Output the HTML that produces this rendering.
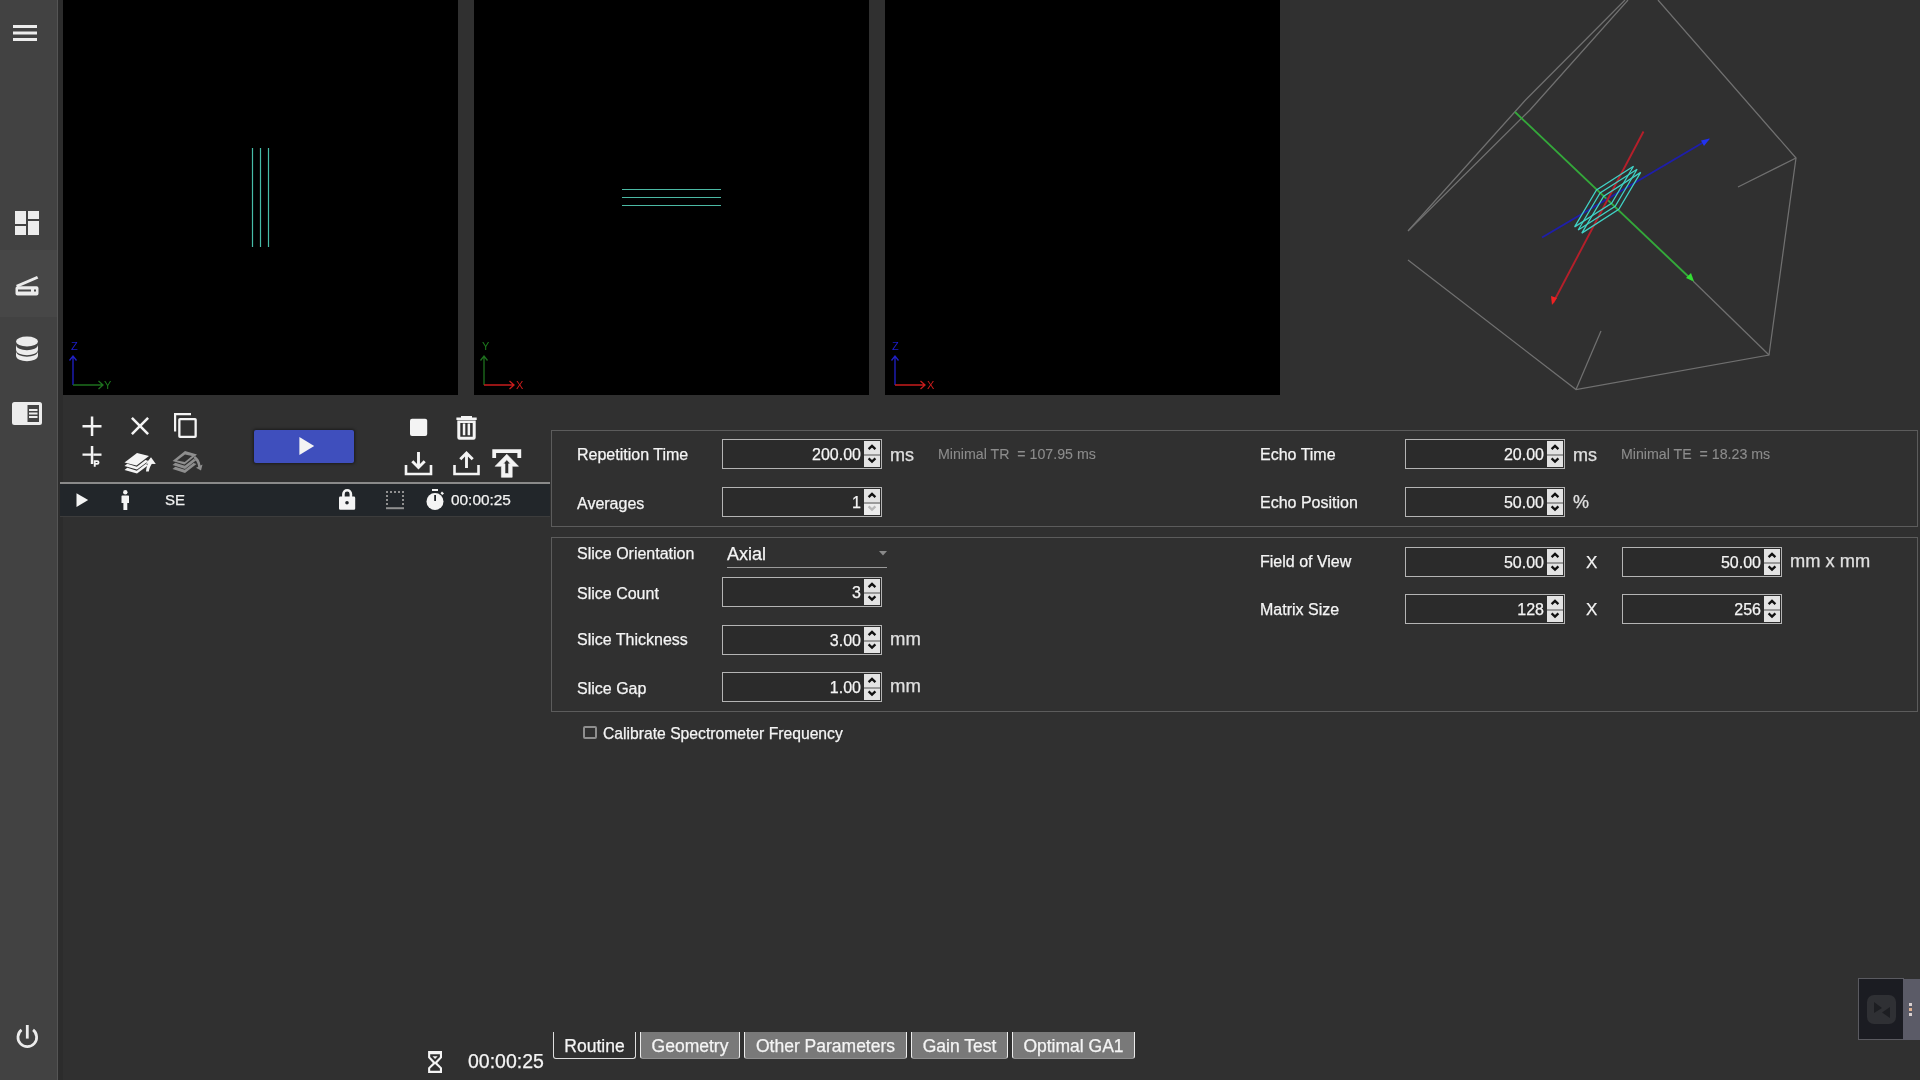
<!DOCTYPE html>
<html><head><meta charset="utf-8">
<style>
*{margin:0;padding:0;box-sizing:border-box}
html,body{width:1920px;height:1080px;overflow:hidden;background:#303030;font-family:"Liberation Sans",sans-serif;color:#f2f2f2}
.a{position:absolute}
.t{position:absolute;white-space:nowrap;line-height:1;-webkit-text-stroke:0.25px currentColor}
.spin .v,.tab{-webkit-text-stroke:0.25px currentColor}
body{filter:grayscale(0.001)}
#side{left:0;top:0;width:57px;height:1080px;background:#424242}
#sideb{left:57px;top:0;width:1px;height:1080px;background:#555}
#strip{left:58px;top:0;width:5px;height:1080px;background:#2c2c2c}
.vp{top:0;width:395px;height:395px;background:#000}
.lbl{font-size:16px;color:#f4f4f4}
.spin{position:absolute;width:160px;height:30px;border:1px solid #b4b4b4;background:#2b2b2b}
.spin .v{position:absolute;right:20px;top:0;line-height:30px;font-size:16px;color:#f4f4f4}
.spin .bt{position:absolute;right:1px;top:1px;width:16px;height:13px;background:#e3e3e3}
.spin .bb{position:absolute;right:1px;bottom:1px;width:16px;height:13px;background:#e3e3e3}
.unit{font-size:18px;color:#e0e0e0}
.minf{font-size:14.2px;color:#8c8c8c;-webkit-text-stroke:0.1px currentColor!important}
.grp{position:absolute;border:1px solid #5c5c5c}
.tab{position:absolute;top:1032px;height:27px;background:#797979;border:1px solid #ececec;border-bottom-color:#8e8e8e;border-top:none;border-radius:0 0 3px 3px;font-size:17.5px;color:#f4f4f4;text-align:center;line-height:28px}
</style></head><body>
<!-- sidebar -->
<div id="side" class="a"></div>
<div class="a" style="left:0;top:250px;width:57px;height:67px;background:#474747"></div>
<div id="sideb" class="a"></div>
<div id="strip" class="a"></div>
<svg class="a" style="left:0;top:0" width="57" height="1080" viewBox="0 0 57 1080" fill="#ececec">
 <!-- menu -->
 <rect x="13" y="25" width="24" height="3"/><rect x="13" y="31.5" width="24" height="3"/><rect x="13" y="38" width="24" height="3"/>
 <!-- dashboard -->
 <path d="M15 211h11v13H15zM28 211h11v8H28zM15 226h11v9H15zM28 221h11v14H28z"/>
 <!-- scanner -->
 <path d="M16 285L37 276L38.3 278.6L17.5 287.5Z"/>
 <path d="M17.5 286.3H36.5A2 2 0 0 1 38.5 288.3V293.5A2 2 0 0 1 36.5 295.5H17.5A2 2 0 0 1 15.5 293.5V288.3A2 2 0 0 1 17.5 286.3ZM18 289.5V291.5H31V289.5ZM34 289.5V291.5H36V289.5Z" fill-rule="evenodd"/>
 <!-- database -->
 <ellipse cx="27" cy="341.5" rx="11" ry="5"/>
 <path d="M16 344.5C16 352 38 352 38 344.5V349.5C38 357 16 357 16 349.5Z"/>
 <path d="M16 351C16 358.5 38 358.5 38 351V355.5C38 363 16 363 16 355.5Z"/>
 <!-- panel -->
 <path d="M14.5 402H39.5A2.5 2.5 0 0 1 42 404.5V422.5A2.5 2.5 0 0 1 39.5 425H14.5A2.5 2.5 0 0 1 12 422.5V404.5A2.5 2.5 0 0 1 14.5 402ZM27.5 405V422H39V405Z" fill-rule="evenodd"/>
 <path d="M29 409H37.5V411H29zM29 412.5H37.5V414.5H29zM29 416H37.5V418H29z"/>
 <!-- power -->
 <path d="M25.9 1025H28.7V1038.6H25.9Z"/>
 <path d="M20.71 1028.87A10.7 10.7 0 1 0 33.89 1028.87L32.23 1031.0A8 8 0 1 1 22.37 1031.0Z"/>
</svg>

<!-- viewports -->
<div class="a vp" style="left:63px"></div>
<div class="a vp" style="left:474px"></div>
<div class="a vp" style="left:885px"></div>
<svg class="a" style="left:0;top:0" width="1920" height="400" viewBox="0 0 1920 400">
 <g fill="none" stroke-width="1.2">
  <!-- vp1 slices -->
  <path d="M252.5 148V247M260.5 148V247M268.5 148V247" stroke="#46bca8"/>
  <!-- vp2 slices -->
  <path d="M622 189.5H721M622 197.5H721M622 205.5H721" stroke="#4cb9a4"/>
  <!-- vp1 axes -->
  <path d="M73 385V356M69.5 360.5L73 356L76.5 360.5" stroke="#2020c8" stroke-width="1.3"/>
  <path d="M73 385H103M98.5 381L103 385L98.5 389" stroke="#1e701e" stroke-width="1.3"/>
  <!-- vp2 axes -->
  <path d="M484 385V356M480.5 360.5L484 356L487.5 360.5" stroke="#1e701e" stroke-width="1.3"/>
  <path d="M484 385H514M509.5 381L514 385L509.5 389" stroke="#c81c1c" stroke-width="1.3"/>
  <!-- vp3 axes -->
  <path d="M895 385V356M891.5 360.5L895 356L898.5 360.5" stroke="#2020c8" stroke-width="1.3"/>
  <path d="M895 385H925M920.5 381L925 385L920.5 389" stroke="#c81c1c" stroke-width="1.3"/>
 </g>
 <g font-family="Liberation Sans" font-size="11">
  <text x="71" y="350" fill="#1c1ccc">Z</text>
  <text x="104" y="389" fill="#1d7a1d">Y</text>
  <text x="482" y="350" fill="#1d7a1d">Y</text>
  <text x="516" y="389" fill="#cc1c1c">X</text>
  <text x="892" y="350" fill="#1c1ccc">Z</text>
  <text x="927" y="389" fill="#cc1c1c">X</text>
 </g>
 <!-- 3D box -->
 <g fill="none" stroke="#707070" stroke-width="1.25">
  <path d="M1625 0L1525.5 100L1408 231"/>
  <path d="M1628 0L1530 110L1409 230"/>
  <path d="M1658 0L1796 158L1769 355L1576 389.5L1408 260"/>
  <path d="M1796 158L1738 187"/>
  <path d="M1576 389.5L1601 331"/>
  <path d="M1693 281L1769 355"/>
 </g>
 <!-- 3D axes -->
 <g fill="none" stroke-width="1.9">
  <path d="M1515 112L1692 280" stroke="#34a83a"/>
  <path d="M1542 237.5L1709 139" stroke="#1e1eaa"/>
  <path d="M1643.5 131.5L1553 303" stroke="#b51f2a"/>
 </g>
 <g>
  <path d="M1694 281.5L1686 278L1691 273Z" fill="#33dd33"/>
  <path d="M1710 138.5L1701 140.5L1704 146Z" fill="#2233ee"/>
  <path d="M1552 305L1551 296L1557 298Z" fill="#ee2222"/>
 </g>
 <!-- 3D slices -->
 <g fill="none" stroke="#40d2c6" stroke-width="1.25">
  <path d="M1574.6 226.9L1596.5 189.9L1633.5 166.2L1611.6 203.2Z"/>
  <path d="M1578.2 230L1600.1 193L1637.1 169.3L1615.2 206.3Z"/>
  <path d="M1581.8 233.1L1603.7 196.1L1640.7 172.4L1618.8 209.4Z"/>
 </g>
</svg>

<!-- sequence row -->
<div class="a" style="left:60px;top:482px;width:490px;height:2px;background:#8a8a8a"></div>
<div class="a" style="left:60px;top:484px;width:490px;height:32px;background:#22262a"></div>
<div class="a" style="left:60px;top:516px;width:490px;height:1px;background:#3c3c3c"></div>

<!-- toolbar -->
<svg class="a" style="left:60px;top:400px" width="490" height="120" viewBox="60 400 490 120">
 <g fill="#f4f4f4">
  <!-- add -->
  <path d="M90.8 416.5H93.3V425H101.5V427.5H93.3V436H90.8V427.5H82.5V425H90.8Z"/>
  <!-- close -->
  <path d="M131 418.8L132.8 417L140 424.2L147.2 417L149 418.8L141.8 426L149 433.2L147.2 435L140 427.8L132.8 435L131 433.2L138.2 426Z"/>
  <!-- copy -->
  <path d="M174 413H191V415.2H176.2V431.5H174Z"/>
  <path d="M180 418H195A1.8 1.8 0 0 1 196.8 419.8V436.2A1.8 1.8 0 0 1 195 438H180A1.8 1.8 0 0 1 178.2 436.2V419.8A1.8 1.8 0 0 1 180 418ZM180.5 420.3V435.7H194.5V420.3Z" fill-rule="evenodd"/>
  <!-- add P -->
  <path d="M90.8 446H93.3V464H90.8V455.8H82.5V453.5H90.8Z"/>
  <path d="M93.3 453.5H101.5V455.8H93.3Z"/>
  <path d="M93.8 460.3H97.3A2.2 2.2 0 0 1 97.3 464.7H95.7V466.8H93.8ZM95.7 462V463H97.1A0.5 0.5 0 0 0 97.1 462Z" fill-rule="evenodd"/>
  <!-- stop -->
  <rect x="410" y="418.8" width="17.2" height="17.2" rx="2"/>
  <!-- trash -->
  <path d="M461 416H472V417.5H476.7V420H456.4V417.5H461Z"/>
  <path d="M457.3 420.5H475.7V437.5A2.2 2.2 0 0 1 473.5 439.7H459.5A2.2 2.2 0 0 1 457.3 437.5ZM460.3 423V436.8H472.7V423Z" fill-rule="evenodd"/>
  <path d="M462.8 423.5H465.3V435.3H462.8zM467.6 423.5H470.1V435.3H467.6z"/>
 </g>
 <g fill="none" stroke="#f4f4f4" stroke-width="2.6">
  <!-- download -->
  <path d="M406 465V474H431V465"/>
  <path d="M418.5 452V467.5M412.3 461.3L418.5 467.5L424.7 461.3" stroke-width="2.9"/>
  <!-- upload -->
  <path d="M454.5 465V474H478.5V465"/>
  <path d="M466.5 468V453M460.3 459.2L466.5 453L472.7 459.2" stroke-width="2.9"/>
 </g>
 <!-- upload to top -->
 <path d="M494.2 458V451.2H519.3V458" fill="none" stroke="#f4f4f4" stroke-width="3.8"/>
 <path d="M506.8 454.2L518.5 466.3H512.2V477.3H501.4V466.3H495.1ZM506.8 459.8L503.2 463.8H505V473.5H508.6V463.8H510.4Z" fill="#f4f4f4" fill-rule="evenodd" stroke="#f4f4f4" stroke-width="0.6" stroke-linejoin="round"/>
 <!-- layers up -->
 <g fill="#f4f4f4">
  <path d="M124.5 462.5L137 453L149 456L136.5 465.5Z"/>
  <path d="M124.5 466L127.3 463.8L136.8 466.7L145.5 460L148.5 461L137 469.5Z"/>
  <path d="M124.5 470L127.3 467.8L136.8 470.7L145.5 464L148.5 465L137 473.5Z"/>
  <path d="M146 471.5C146.3 467.5 147.5 464 149.5 461.5L152.5 462.8C150.8 465.3 149.3 468.3 148.8 471.5Z"/><path d="M145.8 463.8L151 457.3L155.8 464Z"/>
 </g>
 <!-- layers down (disabled) -->
 <g fill="#8e8e8e">
  <path d="M172.5 461L185 451L197 454.5L184.5 464.5ZM177 460.5L184.8 462L192 456L185 454.5Z" fill-rule="evenodd"/>
  <path d="M172.5 465L175.3 462.8L184.8 465.7L193.5 459L196.5 460L185 469Z"/>
  <path d="M172.5 469L175.3 466.8L184.8 469.7L193.5 463L196.5 464L185 473Z"/>
  <path d="M195 456C198 458 200 461 200.5 465.5L202.5 464.5L201 470.5L196 467.8L198.2 466.8C197.8 463 196 460 193.5 458Z"/>
 </g>
</svg>
<!-- play button -->
<div class="a" style="left:254px;top:430px;width:100px;height:33px;background:#3f4fbd;border-radius:2px;box-shadow:0 0 3px 1px rgba(0,0,0,.45)"></div>
<svg class="a" style="left:299px;top:437px" width="16" height="18" viewBox="0 0 16 18"><path d="M0.4 0L15.2 9L0.4 18Z" fill="#f4f4f4"/></svg>

<!-- row icons -->
<svg class="a" style="left:60px;top:484px" width="490" height="32" viewBox="60 484 490 32" fill="#f4f4f4">
 <path d="M76.5 493.2L88.2 500L76.5 506.9Z"/>
 <circle cx="125.3" cy="492.3" r="2.2"/>
 <path d="M122.5 495.5H128.2A0.8 0.8 0 0 1 129 496.3V503H127.3V510H123.4V503H121.5V496.3A0.8 0.8 0 0 1 122.3 495.5Z"/>
 <!-- lock -->
 <path d="M343.4 497V494A3.75 3.75 0 0 1 350.9 494V497" fill="none" stroke="#f4f4f4" stroke-width="2.6"/>
 <path d="M340.3 496.6H353.9A1.3 1.3 0 0 1 355.2 497.9V508.5A1.3 1.3 0 0 1 353.9 509.8H340.3A1.3 1.3 0 0 1 339 508.5V497.9A1.3 1.3 0 0 1 340.3 496.6ZM347 501A1.8 1.8 0 1 0 347 504.6A1.8 1.8 0 1 0 347 501Z" fill-rule="evenodd"/>
 <!-- dotted rect -->
 <g fill="#909090"><rect x="386" y="491" width="2" height="2"/><rect x="390" y="491" width="2" height="2"/><rect x="394" y="491" width="2" height="2"/><rect x="398" y="491" width="2" height="2"/><rect x="402" y="491" width="2" height="2"/><rect x="386" y="495" width="2" height="2"/><rect x="402" y="495" width="2" height="2"/><rect x="386" y="499" width="2" height="2"/><rect x="402" y="499" width="2" height="2"/><rect x="386" y="503" width="2" height="2"/><rect x="402" y="503" width="2" height="2"/><rect x="386" y="507.2" width="18" height="2"/></g>
 <!-- stopwatch -->
 <rect x="432" y="489" width="6" height="2"/>
 <circle cx="435" cy="501.5" r="8.5"/>
 <path d="M440.5 493.2L442 491.5L444 493.5L442.3 495Z"/>
 <rect x="434.2" y="495" width="1.8" height="6" fill="#22262a"/>
</svg>
<div class="t" style="left:165px;top:492px;font-size:15px">SE</div>
<div class="t" style="left:451px;top:492px;font-size:15.4px">00:00:25</div>

<!-- param groups -->
<div class="grp" style="left:551px;top:430px;width:1367px;height:97px"></div>
<div class="grp" style="left:551px;top:537px;width:1367px;height:175px"></div>

<!-- params -->
<div class="t lbl" style="left:577px;top:447px">Repetition Time</div>
<div class="spin" style="left:722px;top:439px"><div class="v">200.00</div><div class="bt"></div><div class="bb" style="background:#e3e3e3"></div><svg class="a" style="right:1px;top:1px" width="16" height="28" viewBox="0 0 16 28"><path d="M4.6 8.2L8 4.9L11.4 8.2" fill="none" stroke="#111" stroke-width="2.3"/><path d="M4.6 17.4L8 20.7L11.4 17.4" fill="none" stroke-width="2.3" stroke="#111"/><rect x="0" y="13" width="16" height="2" fill="#9a9a9a"/></svg></div>
<div class="t unit" style="left:890px;top:446px">ms</div>
<div class="t minf" style="left:938px;top:447px">Minimal TR&nbsp; = 107.95 ms</div>
<div class="t lbl" style="left:577px;top:496px">Averages</div>
<div class="spin" style="left:722px;top:487px"><div class="v">1</div><div class="bt"></div><div class="bb" style="background:#ececec"></div><svg class="a" style="right:1px;top:1px" width="16" height="28" viewBox="0 0 16 28"><path d="M4.6 8.2L8 4.9L11.4 8.2" fill="none" stroke="#111" stroke-width="2.3"/><path d="M4.6 17.4L8 20.7L11.4 17.4" fill="none" stroke-width="2.3" stroke="#b8b8b8"/><rect x="0" y="13" width="16" height="2" fill="#9a9a9a"/></svg></div>
<div class="t lbl" style="left:1260px;top:447px">Echo Time</div>
<div class="spin" style="left:1405px;top:439px"><div class="v">20.00</div><div class="bt"></div><div class="bb" style="background:#e3e3e3"></div><svg class="a" style="right:1px;top:1px" width="16" height="28" viewBox="0 0 16 28"><path d="M4.6 8.2L8 4.9L11.4 8.2" fill="none" stroke="#111" stroke-width="2.3"/><path d="M4.6 17.4L8 20.7L11.4 17.4" fill="none" stroke-width="2.3" stroke="#111"/><rect x="0" y="13" width="16" height="2" fill="#9a9a9a"/></svg></div>
<div class="t unit" style="left:1573px;top:446px">ms</div>
<div class="t minf" style="left:1621px;top:447px">Minimal TE&nbsp; = 18.23 ms</div>
<div class="t lbl" style="left:1260px;top:495px">Echo Position</div>
<div class="spin" style="left:1405px;top:487px"><div class="v">50.00</div><div class="bt"></div><div class="bb" style="background:#e3e3e3"></div><svg class="a" style="right:1px;top:1px" width="16" height="28" viewBox="0 0 16 28"><path d="M4.6 8.2L8 4.9L11.4 8.2" fill="none" stroke="#111" stroke-width="2.3"/><path d="M4.6 17.4L8 20.7L11.4 17.4" fill="none" stroke-width="2.3" stroke="#111"/><rect x="0" y="13" width="16" height="2" fill="#9a9a9a"/></svg></div>
<div class="t unit" style="left:1573px;top:493px">%</div>
<div class="t lbl" style="left:577px;top:546px">Slice Orientation</div>
<div class="t" style="left:727px;top:545px;font-size:18px;color:#f4f4f4">Axial</div>
<div class="a" style="left:727px;top:567px;width:160px;height:1px;background:#9a9a9a"></div>
<svg class="a" style="left:879px;top:551px" width="8" height="5" viewBox="0 0 8 5"><path d="M0 0H8L4 4.5Z" fill="#8a8a8a"/></svg>
<div class="t lbl" style="left:577px;top:586px">Slice Count</div>
<div class="spin" style="left:722px;top:577px"><div class="v">3</div><div class="bt"></div><div class="bb" style="background:#e3e3e3"></div><svg class="a" style="right:1px;top:1px" width="16" height="28" viewBox="0 0 16 28"><path d="M4.6 8.2L8 4.9L11.4 8.2" fill="none" stroke="#111" stroke-width="2.3"/><path d="M4.6 17.4L8 20.7L11.4 17.4" fill="none" stroke-width="2.3" stroke="#111"/><rect x="0" y="13" width="16" height="2" fill="#9a9a9a"/></svg></div>
<div class="t lbl" style="left:577px;top:632px">Slice Thickness</div>
<div class="spin" style="left:722px;top:625px"><div class="v">3.00</div><div class="bt"></div><div class="bb" style="background:#e3e3e3"></div><svg class="a" style="right:1px;top:1px" width="16" height="28" viewBox="0 0 16 28"><path d="M4.6 8.2L8 4.9L11.4 8.2" fill="none" stroke="#111" stroke-width="2.3"/><path d="M4.6 17.4L8 20.7L11.4 17.4" fill="none" stroke-width="2.3" stroke="#111"/><rect x="0" y="13" width="16" height="2" fill="#9a9a9a"/></svg></div>
<div class="t unit" style="left:890px;top:630px;font-size:18.5px">mm</div>
<div class="t lbl" style="left:577px;top:681px">Slice Gap</div>
<div class="spin" style="left:722px;top:672px"><div class="v">1.00</div><div class="bt"></div><div class="bb" style="background:#e3e3e3"></div><svg class="a" style="right:1px;top:1px" width="16" height="28" viewBox="0 0 16 28"><path d="M4.6 8.2L8 4.9L11.4 8.2" fill="none" stroke="#111" stroke-width="2.3"/><path d="M4.6 17.4L8 20.7L11.4 17.4" fill="none" stroke-width="2.3" stroke="#111"/><rect x="0" y="13" width="16" height="2" fill="#9a9a9a"/></svg></div>
<div class="t unit" style="left:890px;top:677px;font-size:18.5px">mm</div>
<div class="t lbl" style="left:1260px;top:554px">Field of View</div>
<div class="spin" style="left:1405px;top:547px"><div class="v">50.00</div><div class="bt"></div><div class="bb" style="background:#e3e3e3"></div><svg class="a" style="right:1px;top:1px" width="16" height="28" viewBox="0 0 16 28"><path d="M4.6 8.2L8 4.9L11.4 8.2" fill="none" stroke="#111" stroke-width="2.3"/><path d="M4.6 17.4L8 20.7L11.4 17.4" fill="none" stroke-width="2.3" stroke="#111"/><rect x="0" y="13" width="16" height="2" fill="#9a9a9a"/></svg></div>
<div class="t" style="left:1586px;top:554px;font-size:17px;color:#f4f4f4">X</div>
<div class="spin" style="left:1622px;top:547px"><div class="v">50.00</div><div class="bt"></div><div class="bb" style="background:#e3e3e3"></div><svg class="a" style="right:1px;top:1px" width="16" height="28" viewBox="0 0 16 28"><path d="M4.6 8.2L8 4.9L11.4 8.2" fill="none" stroke="#111" stroke-width="2.3"/><path d="M4.6 17.4L8 20.7L11.4 17.4" fill="none" stroke-width="2.3" stroke="#111"/><rect x="0" y="13" width="16" height="2" fill="#9a9a9a"/></svg></div>
<div class="t unit" style="left:1790px;top:552px;font-size:18.3px">mm x mm</div>
<div class="t lbl" style="left:1260px;top:602px">Matrix Size</div>
<div class="spin" style="left:1405px;top:594px"><div class="v">128</div><div class="bt"></div><div class="bb" style="background:#e3e3e3"></div><svg class="a" style="right:1px;top:1px" width="16" height="28" viewBox="0 0 16 28"><path d="M4.6 8.2L8 4.9L11.4 8.2" fill="none" stroke="#111" stroke-width="2.3"/><path d="M4.6 17.4L8 20.7L11.4 17.4" fill="none" stroke-width="2.3" stroke="#111"/><rect x="0" y="13" width="16" height="2" fill="#9a9a9a"/></svg></div>
<div class="t" style="left:1586px;top:601px;font-size:17px;color:#f4f4f4">X</div>
<div class="spin" style="left:1622px;top:594px"><div class="v">256</div><div class="bt"></div><div class="bb" style="background:#e3e3e3"></div><svg class="a" style="right:1px;top:1px" width="16" height="28" viewBox="0 0 16 28"><path d="M4.6 8.2L8 4.9L11.4 8.2" fill="none" stroke="#111" stroke-width="2.3"/><path d="M4.6 17.4L8 20.7L11.4 17.4" fill="none" stroke-width="2.3" stroke="#111"/><rect x="0" y="13" width="16" height="2" fill="#9a9a9a"/></svg></div>
<div class="a" style="left:583px;top:726px;width:14px;height:13px;border:2px solid #8e8e8e;border-radius:2px"></div>
<div class="t" style="left:603px;top:726px;font-size:15.7px;color:#f4f4f4">Calibrate Spectrometer Frequency</div>
<svg class="a" style="left:426px;top:1050px" width="18" height="24" viewBox="0 0 18 24"><path d="M2.1 1H16V7.8L11.2 13L16 17.8V23H2.1V17.8L6.9 13L2.1 7.8ZM4.2 4.2V7L9.05 12L13.9 7V4.2ZM4.2 20.8H13.9V18.6L9.05 14L4.2 18.6Z" fill="#f4f4f4" fill-rule="evenodd"/><path d="M6.5 6.3H11.7L9.1 9Z" fill="#f4f4f4"/></svg>
<div class="t" style="left:468px;top:1052px;font-size:19.5px;color:#f4f4f4">00:00:25</div>
<div class="tab" style="left:553px;width:83px;background:#303030;border:1px solid #dedede;border-top:none">Routine</div>
<div class="tab" style="left:640px;width:100px">Geometry</div>
<div class="tab" style="left:744px;width:163px">Other Parameters</div>
<div class="tab" style="left:911px;width:97px">Gain Test</div>
<div class="tab" style="left:1012px;width:123px">Optimal GA1</div>
<div class="a" style="left:1858px;top:978px;width:46px;height:62px;background:#1b1c22;border:1px solid #5a5a60"></div>
<div class="a" style="left:1867px;top:995px;width:29px;height:29px;background:#2f3034;border-radius:7px"></div>
<svg class="a" style="left:1873px;top:1001px" width="18" height="18" viewBox="0 0 18 18"><path d="M1 1L9 7L1 12ZM17 6L9 11.5L17 17Z" fill="#1d1e22"/></svg>
<div class="a" style="left:1903px;top:979px;width:17px;height:61px;background:#5b5b67"></div>
<div class="a" style="left:1909px;top:1003px;width:3px;height:3px;background:#d8d0d0"></div><div class="a" style="left:1909px;top:1008px;width:3px;height:3px;background:#e0b090"></div><div class="a" style="left:1909px;top:1013px;width:3px;height:3px;background:#d8d0d0"></div>
</body></html>
